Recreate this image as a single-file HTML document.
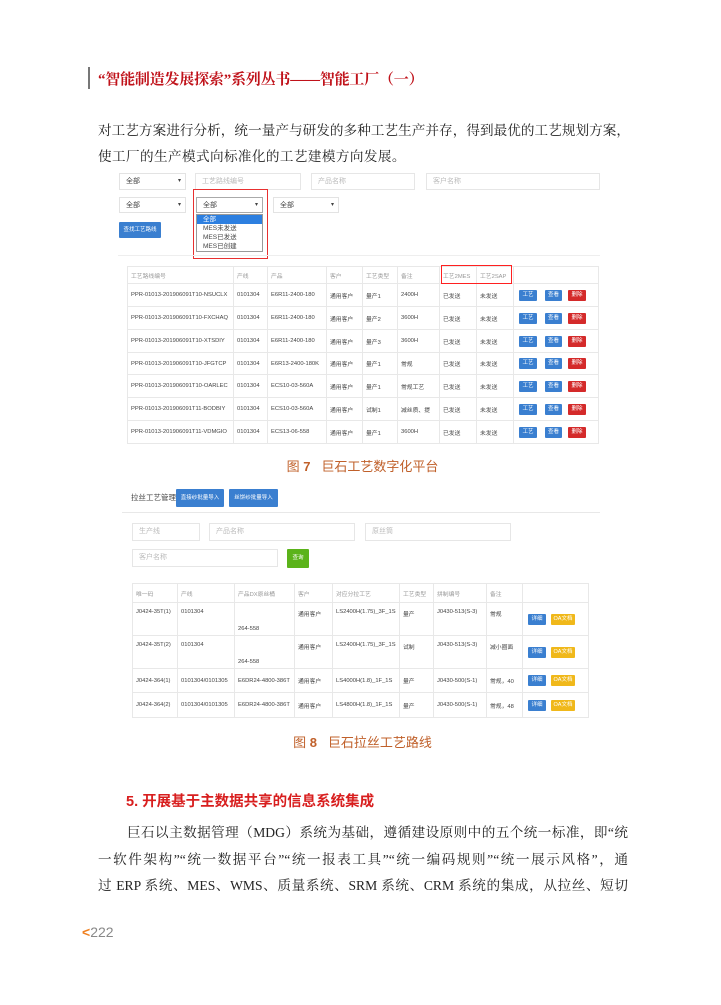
<!DOCTYPE html>
<html><head><meta charset="utf-8"><style>
*{margin:0;padding:0;box-sizing:border-box}
body{width:721px;height:1005px;background:#fff;position:relative;overflow:hidden;font-family:"Liberation Sans","Noto Sans CJK SC",sans-serif}
.a{position:absolute}
.serif{font-family:"Liberation Serif","Noto Serif CJK SC",serif}
.inp{position:absolute;border:1px solid #e6e6e6;background:#fff;font-size:7px;color:#bbb;padding:4px 6px;line-height:8px}
.sel{position:absolute;border:1px solid #e3e3e3;font-size:7px;color:#444;padding:4px 6px;line-height:8px}
.sel:after{content:"▾";position:absolute;right:4px;top:3px;font-size:6px}
table{border-collapse:collapse;table-layout:fixed;position:absolute}
td{border:1px solid #e8e8e8;font-size:5.8px;color:#444;padding:0 3px;white-space:nowrap;overflow:hidden}
.b{display:inline-block;color:#fff;font-size:5.5px;height:11px;line-height:11px;text-align:center;border-radius:1px}
.bl{background:#3a7fd0}.rd{background:#d42a2a}.ye{background:#f0b81a}
.par{font-size:13.6px;color:#222;line-height:26px;white-space:nowrap;text-align:justify;text-align-last:justify}
</style></head><body>
<div class="a" style="left:88px;top:67px;width:2px;height:22px;background:#777"></div>
<div class="a serif" style="left:98px;top:68px;font-size:15px;font-weight:bold;color:#c0121a;white-space:nowrap;letter-spacing:-0.2px">“智能制造发展探索”系列丛书——智能工厂（一）</div>
<div class="a serif par" style="left:98px;top:118px;width:532px">对工艺方案进行分析，统一量产与研发的多种工艺生产并存，得到最优的工艺规划方案，</div>
<div class="a serif" style="left:98px;top:144px;font-size:13.6px;color:#222;line-height:26px;white-space:nowrap;letter-spacing:0.4px">使工厂的生产模式向标准化的工艺建模方向发展。</div>

<div class="sel" style="left:119px;top:173px;width:67px;height:17px">全部</div>
<div class="inp" style="left:195px;top:173px;width:106px;height:17px">工艺路线编号</div>
<div class="inp" style="left:311px;top:173px;width:104px;height:17px">产品名称</div>
<div class="inp" style="left:426px;top:173px;width:174px;height:17px">客户名称</div>
<div class="sel" style="left:119px;top:197px;width:67px;height:16px">全部</div>
<div class="sel" style="left:196px;top:197px;width:67px;height:16px;border-color:#aaa">全部</div>
<div class="sel" style="left:273px;top:197px;width:66px;height:16px">全部</div>
<div class="a" style="left:196px;top:214px;width:67px;height:38px;border:1px solid #999;font-size:6.5px;color:#444;line-height:9px;background:#fff">
<div style="background:#2d7fe0;color:#fff;padding-left:6px">全部</div><div style="padding-left:6px">MES未发送</div><div style="padding-left:6px">MES已发送</div><div style="padding-left:6px">MES已创建</div></div>
<div class="a" style="left:193px;top:189px;width:75px;height:70px;border:1.5px solid #e83030"></div>
<div class="a b bl" style="left:119px;top:222px;width:42px;height:16px;line-height:16px">查找工艺路线</div>
<div class="a" style="left:118px;top:255px;width:482px;height:1px;background:#eee"></div>
<table style="left:127px;top:266px;width:472px">
<colgroup><col style="width:106px"><col style="width:34px"><col style="width:59px"><col style="width:36px"><col style="width:35px"><col style="width:42px"><col style="width:37px"><col style="width:37px"><col></colgroup>
<tr style="height:17px"><td style="color:#999">工艺路线编号</td><td style="color:#999">产线</td><td style="color:#999">产品</td><td style="color:#999">客户</td><td style="color:#999">工艺类型</td><td style="color:#999">备注</td><td style="color:#999">工艺2MES</td><td style="color:#999">工艺2SAP</td><td></td></tr>
<tr style="height:23px"><td>PPR-01013-201906091T10-NSUCLX</td><td>0101304</td><td>E6R11-2400-180</td><td>通用客户</td><td>量产1</td><td>2400H</td><td>已发送</td><td>未发送</td><td><span class="b bl" style="width:18px;margin-left:2px">工艺</span><span class="b bl" style="width:17px;margin-left:8px">查看</span><span class="b rd" style="width:18px;margin-left:6px">删除</span></td></tr>
<tr style="height:23px"><td>PPR-01013-201906091T10-FXCHAQ</td><td>0101304</td><td>E6R11-2400-180</td><td>通用客户</td><td>量产2</td><td>3600H</td><td>已发送</td><td>未发送</td><td><span class="b bl" style="width:18px;margin-left:2px">工艺</span><span class="b bl" style="width:17px;margin-left:8px">查看</span><span class="b rd" style="width:18px;margin-left:6px">删除</span></td></tr>
<tr style="height:23px"><td>PPR-01013-201906091T10-XTSDIY</td><td>0101304</td><td>E6R11-2400-180</td><td>通用客户</td><td>量产3</td><td>3600H</td><td>已发送</td><td>未发送</td><td><span class="b bl" style="width:18px;margin-left:2px">工艺</span><span class="b bl" style="width:17px;margin-left:8px">查看</span><span class="b rd" style="width:18px;margin-left:6px">删除</span></td></tr>
<tr style="height:22px"><td>PPR-01013-201906091T10-JFGTCP</td><td>0101304</td><td>E6R13-2400-180K</td><td>通用客户</td><td>量产1</td><td>常规</td><td>已发送</td><td>未发送</td><td><span class="b bl" style="width:18px;margin-left:2px">工艺</span><span class="b bl" style="width:17px;margin-left:8px">查看</span><span class="b rd" style="width:18px;margin-left:6px">删除</span></td></tr>
<tr style="height:23px"><td>PPR-01013-201906091T10-OARLEC</td><td>0101304</td><td>ECS10-03-560A</td><td>通用客户</td><td>量产1</td><td>常规工艺</td><td>已发送</td><td>未发送</td><td><span class="b bl" style="width:18px;margin-left:2px">工艺</span><span class="b bl" style="width:17px;margin-left:8px">查看</span><span class="b rd" style="width:18px;margin-left:6px">删除</span></td></tr>
<tr style="height:23px"><td>PPR-01013-201906091T11-BODBIY</td><td>0101304</td><td>ECS10-03-560A</td><td>通用客户</td><td>试制1</td><td>减丝质、提</td><td>已发送</td><td>未发送</td><td><span class="b bl" style="width:18px;margin-left:2px">工艺</span><span class="b bl" style="width:17px;margin-left:8px">查看</span><span class="b rd" style="width:18px;margin-left:6px">删除</span></td></tr>
<tr style="height:23px"><td>PPR-01013-201906091T11-VDMGIO</td><td>0101304</td><td>ECS13-06-558</td><td>通用客户</td><td>量产1</td><td>3600H</td><td>已发送</td><td>未发送</td><td><span class="b bl" style="width:18px;margin-left:2px">工艺</span><span class="b bl" style="width:17px;margin-left:8px">查看</span><span class="b rd" style="width:18px;margin-left:6px">删除</span></td></tr>
</table>
<div class="a" style="left:441px;top:265px;width:71px;height:19px;border:1.5px solid #ff2020;z-index:2"></div>
<div class="a" style="left:0;width:721px;top:456px;text-align:center;font-size:13px;color:#c0602a;padding-left:4px">图 <b>7</b>&nbsp;&nbsp;&nbsp;巨石工艺数字化平台</div>

<div class="a" style="left:131px;top:492px;font-size:7.5px;color:#444">拉丝工艺管理</div>
<div class="a b bl" style="left:176px;top:489px;width:48px;height:18px;line-height:18px">直接纱批量导入</div>
<div class="a b bl" style="left:229px;top:489px;width:49px;height:18px;line-height:18px">丝饼纱批量导入</div>
<div class="a" style="left:122px;top:512px;width:478px;height:1px;background:#e8e8e8"></div>
<div class="inp" style="left:132px;top:523px;width:68px;height:18px">生产线</div>
<div class="inp" style="left:209px;top:523px;width:146px;height:18px">产品名称</div>
<div class="inp" style="left:365px;top:523px;width:146px;height:18px">原丝筒</div>
<div class="inp" style="left:132px;top:549px;width:146px;height:18px">客户名称</div>
<div class="a b" style="left:287px;top:549px;width:22px;height:19px;line-height:19px;background:#5bb31a">查询</div>
<table style="left:132px;top:583px;width:457px">
<colgroup><col style="width:45px"><col style="width:57px"><col style="width:60px"><col style="width:38px"><col style="width:67px"><col style="width:34px"><col style="width:53px"><col style="width:36px"><col></colgroup>
<tr style="height:19px"><td style="color:#999">唯一码</td><td style="color:#999">产线</td><td style="color:#999">产品DX原丝桶</td><td style="color:#999">客户</td><td style="color:#999">对应分拉工艺</td><td style="color:#999">工艺类型</td><td style="color:#999">拼制编号</td><td style="color:#999">备注</td><td></td></tr>
<tr style="height:33px"><td style="vertical-align:top;padding-top:6px">J0424-35T(1)</td><td style="vertical-align:top;padding-top:6px">0101304</td><td style="vertical-align:bottom;padding-bottom:3px">264-558</td><td style="vertical-align:top;padding-top:6px">通用客户</td><td style="vertical-align:top;padding-top:6px">LS2400H(1.75)_3F_1S</td><td style="vertical-align:top;padding-top:6px">量产</td><td style="vertical-align:top;padding-top:6px">J0430-513(S-3)</td><td style="vertical-align:top;padding-top:6px">常规</td><td><span class="b bl" style="width:18px;margin-left:2px">详细</span><span class="b ye" style="width:24px;margin-left:5px">OA文档</span></td></tr>
<tr style="height:33px"><td style="vertical-align:top;padding-top:6px">J0424-35T(2)</td><td style="vertical-align:top;padding-top:6px">0101304</td><td style="vertical-align:bottom;padding-bottom:3px">264-558</td><td style="vertical-align:top;padding-top:6px">通用客户</td><td style="vertical-align:top;padding-top:6px">LS2400H(1.75)_3F_1S</td><td style="vertical-align:top;padding-top:6px">试制</td><td style="vertical-align:top;padding-top:6px">J0430-513(S-3)</td><td style="vertical-align:top;padding-top:6px">减小圈面</td><td><span class="b bl" style="width:18px;margin-left:2px">详细</span><span class="b ye" style="width:24px;margin-left:5px">OA文档</span></td></tr>
<tr style="height:24px"><td>J0424-364(1)</td><td>0101304/0101305</td><td>E6DR24-4800-386T</td><td>通用客户</td><td>LS4000H(1.8)_1F_1S</td><td>量产</td><td>J0430-500(S-1)</td><td>常规，40</td><td><span class="b bl" style="width:18px;margin-left:2px">详细</span><span class="b ye" style="width:24px;margin-left:5px">OA文档</span></td></tr>
<tr style="height:25px"><td>J0424-364(2)</td><td>0101304/0101305</td><td>E6DR24-4800-386T</td><td>通用客户</td><td>LS4800H(1.8)_1F_1S</td><td>量产</td><td>J0430-500(S-1)</td><td>常规，48</td><td><span class="b bl" style="width:18px;margin-left:2px">详细</span><span class="b ye" style="width:24px;margin-left:5px">OA文档</span></td></tr>
</table>
<div class="a" style="left:0;width:721px;top:732px;text-align:center;font-size:13px;color:#c0602a;padding-left:4px">图 <b>8</b>&nbsp;&nbsp;&nbsp;巨石拉丝工艺路线</div>

<div class="a" style="left:126px;top:790px;font-size:14.5px;font-weight:bold;color:#d81e1e">5. 开展基于主数据共享的信息系统集成</div>
<div class="a serif par" style="left:127px;top:820px;width:501px">巨石以主数据管理（MDG）系统为基础，遵循建设原则中的五个统一标准，即“统</div>
<div class="a serif par" style="left:98px;top:847px;width:530px;font-size:13.6px">一软件架构”“统一数据平台”“统一报表工具”“统一编码规则”“统一展示风格”，通</div>
<div class="a serif par" style="left:98px;top:873px;width:530px">过 ERP 系统、MES、WMS、质量系统、SRM 系统、CRM 系统的集成，从拉丝、短切</div>
<div class="a" style="left:82px;top:924px;font-size:14px;color:#888"><span style="color:#f08020;font-weight:bold">&lt;</span>222</div>
</body></html>
